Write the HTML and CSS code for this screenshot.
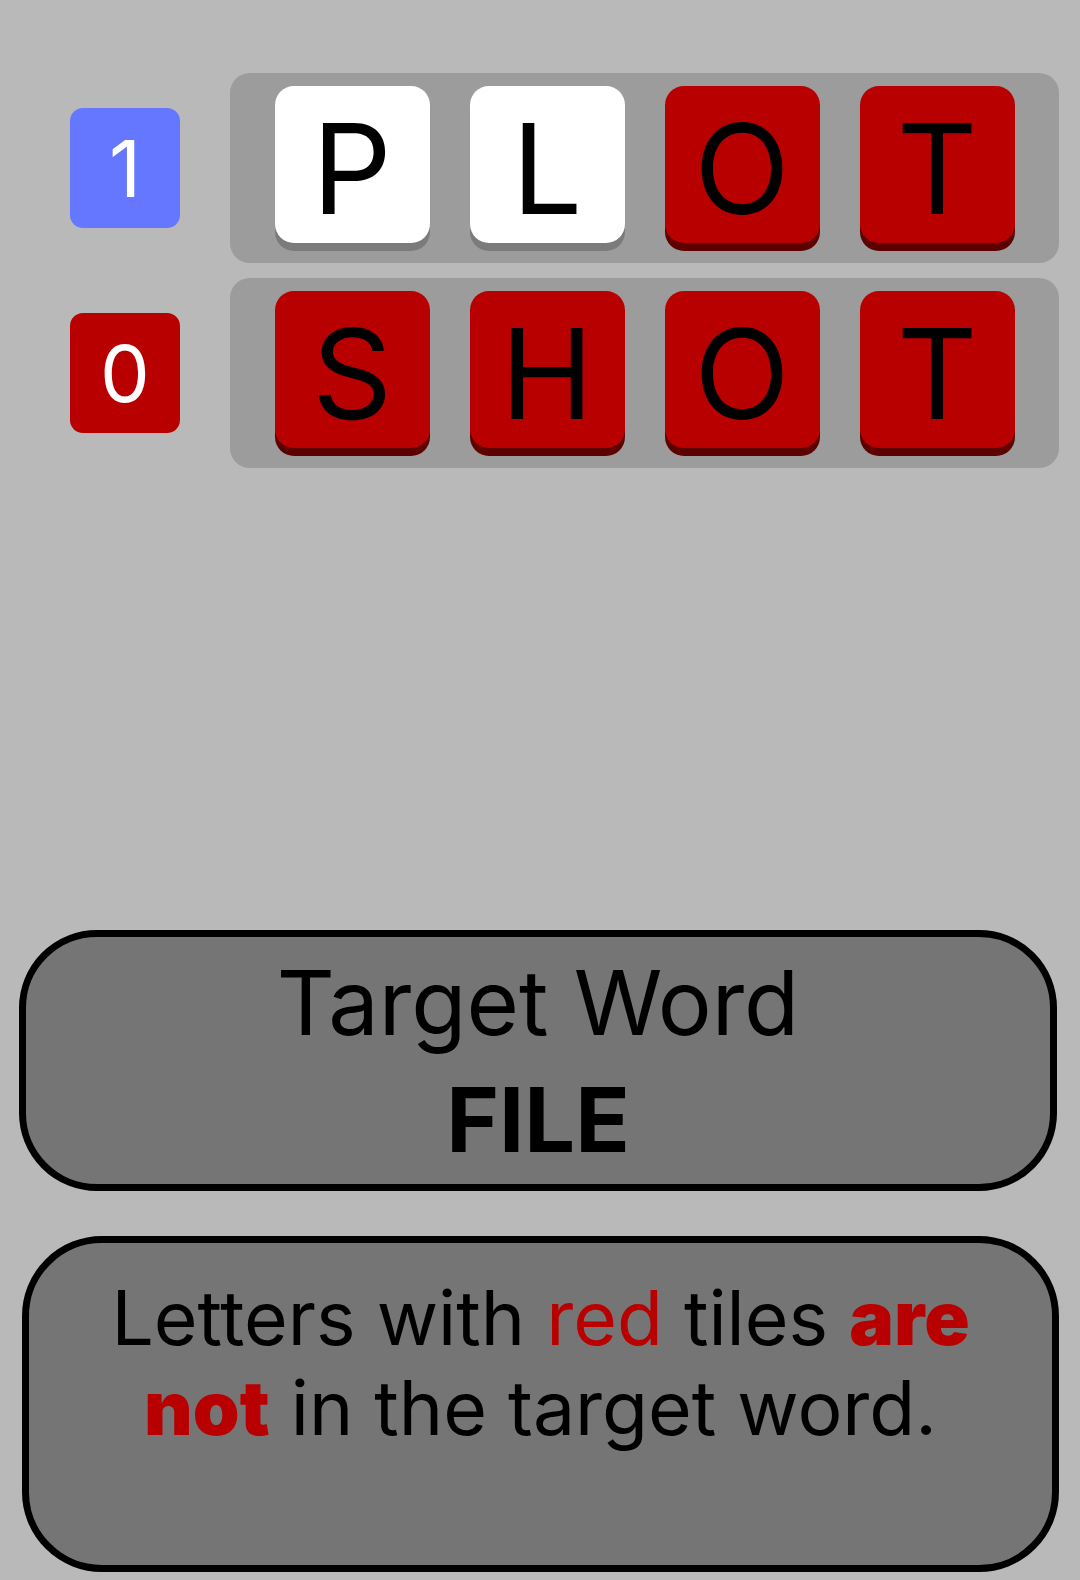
FILE: index.html
```html
<!DOCTYPE html>
<html>
<head>
<meta charset="utf-8">
<link rel="stylesheet" href="styles.css">
</head>
<body>
<div class="page">
  <div class="guesses">
    <div class="guess">
      <div class="badge badge-blue">1</div>
      <div class="row">
        <div class="tile tile-white">P</div>
        <div class="tile tile-white">L</div>
        <div class="tile tile-red">O</div>
        <div class="tile tile-red">T</div>
      </div>
    </div>
    <div class="guess">
      <div class="badge badge-red">0</div>
      <div class="row">
        <div class="tile tile-red">S</div>
        <div class="tile tile-red">H</div>
        <div class="tile tile-red">O</div>
        <div class="tile tile-red">T</div>
      </div>
    </div>
  </div>
  <div class="target">
    <div class="target-label">Target Word</div>
    <div class="target-word">FILE</div>
  </div>
  <div class="hint">
    <p class="hint-text">Letters with <span class="red">red</span> tiles <span class="red strong">are not</span> in the target word.</p>
  </div>
</div>
</body>
</html>
```

FILE: styles.css
```css
html, body {
  margin: 0;
  padding: 0;
  background: #b9b9b9;
}
body {
  width: 1080px;
  height: 1580px;
  overflow: hidden;
  font-family: Inter, "Liberation Sans", sans-serif;
  color: #000;
}
.page {
  padding-top: 73px;
}
.guesses {
  display: flex;
  flex-direction: column;
  gap: 15px;
}
.guess {
  display: flex;
  align-items: center;
  padding-left: 70px;
  gap: 50px;
}
.badge {
  width: 110px;
  height: 120px;
  border-radius: 13px;
  display: flex;
  align-items: center;
  justify-content: center;
  color: #fff;
  font-size: 79px;
  line-height: 1;
}
.badge-blue { background: #6677ff; }
.badge-red { background: #b90000; }
.row {
  width: 829px;
  height: 190px;
  box-sizing: border-box;
  background: #9c9c9c;
  border-radius: 20px;
  display: flex;
  justify-content: center;
  gap: 40px;
  padding-top: 13px;
}
.tile {
  width: 155px;
  height: 157px;
  box-sizing: border-box;
  padding-top: 8px;
  border-radius: 19px;
  display: flex;
  align-items: center;
  justify-content: center;
  font-size: 125px;
  line-height: 1;
}
.tile-white {
  background: #fff;
  box-shadow: 0 8px 0 #7b7b7b;
}
.tile-red {
  background: #b90000;
  box-shadow: 0 8px 0 #5c0000;
}
.target {
  margin: 462px 0 0 19px;
  width: 1038px;
  box-sizing: border-box;
  border: 7px solid #000;
  border-radius: 78px;
  background: #757575;
  padding: 7px 0 6px;
  text-align: center;
}
.target-label {
  font-size: 90px;
  line-height: 117px;
}
.target-word {
  font-size: 90px;
  line-height: 117px;
  font-weight: 700;
}
.hint {
  margin: 45px 0 0 22px;
  width: 1037px;
  height: 336px;
  box-sizing: border-box;
  border: 7px solid #000;
  border-radius: 80px;
  background: #757575;
  padding: 30px 50px 0;
  text-align: center;
}
.hint-text {
  margin: 0;
  font-size: 75px;
  line-height: 90px;
}
.red { color: #b90000; }
.strong { font-weight: 900; }
```
